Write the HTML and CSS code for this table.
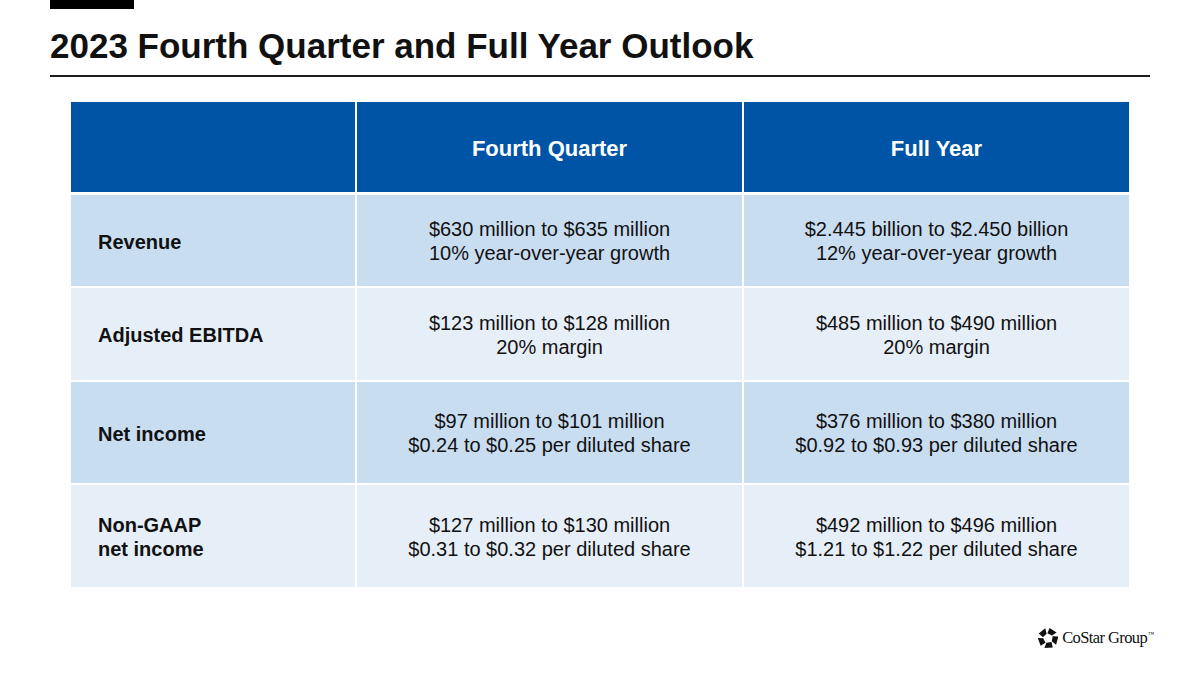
FILE: index.html
```html
<!DOCTYPE html>
<html lang="en">
<head>
<meta charset="utf-8">
<title>2023 Fourth Quarter and Full Year Outlook</title>
<link rel="stylesheet" href="styles.css">
</head>
<body>
<div class="slide">
  <div class="topbar"></div>
  <h1 class="title">2023 Fourth Quarter and Full Year Outlook</h1>
  <div class="rule"></div>
  <div class="outlook">
    <div class="cell head"></div>
    <div class="cell head">Fourth Quarter</div>
    <div class="cell head">Full Year</div>

    <div class="cell label odd">Revenue</div>
    <div class="cell odd"><p>$630 million to $635 million<br>10% year-over-year growth</p></div>
    <div class="cell odd"><p>$2.445 billion to $2.450 billion<br>12% year-over-year growth</p></div>

    <div class="cell label even">Adjusted EBITDA</div>
    <div class="cell even"><p>$123 million to $128 million<br>20% margin</p></div>
    <div class="cell even"><p>$485 million to $490 million<br>20% margin</p></div>

    <div class="cell label odd">Net income</div>
    <div class="cell odd"><p>$97 million to $101 million<br>$0.24 to $0.25 per diluted share</p></div>
    <div class="cell odd"><p>$376 million to $380 million<br>$0.92 to $0.93 per diluted share</p></div>

    <div class="cell label even">Non-GAAP<br>net income</div>
    <div class="cell even"><p>$127 million to $130 million<br>$0.31 to $0.32 per diluted share</p></div>
    <div class="cell even"><p>$492 million to $496 million<br>$1.21 to $1.22 per diluted share</p></div>
  </div>
  <div class="footer">
    <div class="logo">
      <svg class="logo-mark" viewBox="0 0 20 20" width="20" height="20" aria-hidden="true">
        <g fill="#111">
          <polygon points="9.4,5.2 13.9,7.6 18.6,4.6 11.6,0"/>
          <polygon points="9.4,5.2 13.9,7.6 18.6,4.6 11.6,0" transform="rotate(72 10 10.3)"/>
          <polygon points="9.4,5.2 13.9,7.6 18.6,4.6 11.6,0" transform="rotate(144 10 10.3)"/>
          <polygon points="9.4,5.2 13.9,7.6 18.6,4.6 11.6,0" transform="rotate(216 10 10.3)"/>
          <polygon points="9.4,5.2 13.9,7.6 18.6,4.6 11.6,0" transform="rotate(288 10 10.3)"/>
        </g>
      </svg>
      <span class="logo-text">CoStar Group<sup class="tm">™</sup></span>
    </div>
  </div>
</div>
</body>
</html>
```
FILE: styles.css
```css
html, body {
  margin: 0;
  padding: 0;
  background: #ffffff;
}

.slide {
  width: 1200px;
  height: 675px;
  overflow: hidden;
  font-family: "Liberation Sans", Arial, sans-serif;
  color: #111;
}

.topbar {
  width: 84px;
  height: 9px;
  margin-left: 50px;
  background: #000;
}

.title {
  margin: 19px 0 0 50px;
  font-size: 35px;
  line-height: 35px;
  font-weight: bold;
  color: #111;
}

.rule {
  margin: 12px 0 0 50px;
  width: 1100px;
  height: 2px;
  background: #1c1c1c;
}

.outlook {
  margin: 25px 0 0 71px;
  width: 1058px;
  display: grid;
  grid-template-columns: 284px 385px 385px;
  grid-template-rows: 91px 91px 92px 101px 102px;
  column-gap: 2px;
  row-gap: 2px;
}

.cell {
  display: flex;
  align-items: center;
  justify-content: center;
  text-align: center;
  font-size: 20px;
  line-height: 24px;
  color: #111;
}

.cell p {
  margin: 0;
  padding-top: 1px;
}

.head {
  background: #0054a5;
  border-bottom: 1px solid #ffffff;
  color: #ffffff;
  font-weight: bold;
  font-size: 22px;
  padding-top: 4px;
  box-sizing: border-box;
}

.odd {
  background: #c9ddf1;
}

.even {
  background: #e6eef8;
}

.label {
  justify-content: flex-start;
  text-align: left;
  padding-left: 27px;
  font-weight: bold;
  padding-top: 2px;
  box-sizing: border-box;
}

.footer {
  display: flex;
  justify-content: flex-end;
  padding: 41px 46px 0 0;
}

.logo {
  display: flex;
  align-items: center;
  gap: 4px;
}

.logo-mark {
  display: block;
}

.logo-text {
  font-family: "Liberation Serif", "Times New Roman", serif;
  font-size: 16.5px;
  color: #111;
  letter-spacing: -0.6px;
}

.tm {
  font-size: 6px;
  vertical-align: 7px;
  margin-left: 1px;
  letter-spacing: 0;
}
```
